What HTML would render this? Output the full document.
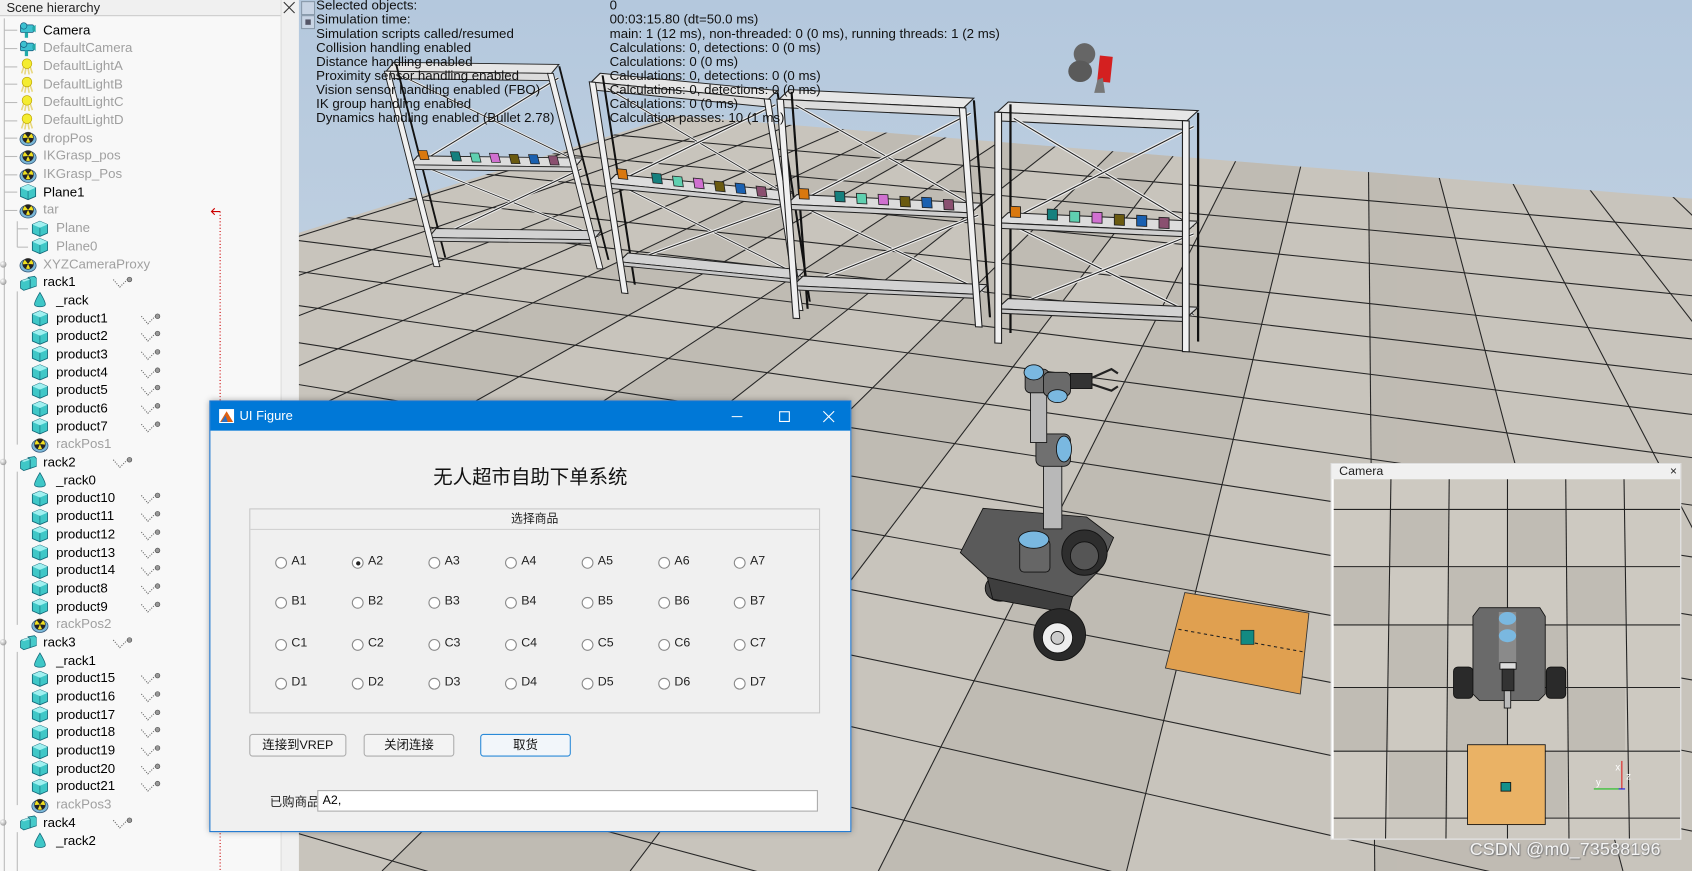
<!DOCTYPE html>
<html><head><meta charset="utf-8"><style>
html,body{margin:0;padding:0;width:1692px;height:871px;overflow:hidden;background:#c9c5bd}
#root{position:absolute;left:0;top:0;width:1568px;height:807px;overflow:hidden;transform-origin:0 0;transform:scale(1.07908,1.07931);font-family:"Liberation Sans","Noto Sans CJK SC",sans-serif}
.abs{position:absolute}
#hier{position:absolute;left:0;top:0;width:260px;height:807px;background:#f8f8f8;overflow:hidden}
#hhead{position:absolute;left:0;top:0;width:260px;height:15px;background:#f0f0f0;border-bottom:1px solid #ccc;font-size:12px;line-height:15px;padding-left:6px;box-sizing:border-box;color:#222}
#strip{position:absolute;left:260px;top:0;width:16px;height:807px;background:#f0f0f0;border-left:1px solid #ddd}
#list{position:absolute;left:0;top:19.6px;width:260px;height:787px;overflow:hidden}
.r{position:relative;height:16.7px;line-height:16.7px;font-size:12.3px;color:#000;white-space:nowrap}
.r svg.ic{position:absolute;top:0.5px;width:16px;height:16px}
.r span{position:absolute}
.l0 svg.ic{left:18px}.l0 span{left:40px}
.l1 svg.ic{left:29px}.l1 span{left:52px}
.g{color:#a0a0a0}
.lk{position:absolute;left:130px;top:3px;width:20px;height:12px}
.l0 .lk{left:104px}
.ex{position:absolute;left:0;top:5px;width:6px;height:6px;border-radius:50%;background:radial-gradient(circle at 35% 35%,#fff,#777)}
#stats{position:absolute;left:293px;top:-1px;font-size:12.3px;line-height:13px;color:#111}
#stats div{height:13px;white-space:nowrap}
#stats b{font-weight:normal;position:absolute;left:272px}
#dlg{position:absolute;left:194px;top:371px;width:595px;height:400px;background:#f0f0f0;border:1px solid #1874d0;box-sizing:border-box;box-shadow:0 0 6px rgba(0,0,0,.35)}
#tb{position:absolute;left:0;top:0;width:100%;height:27px;background:#0078d7;color:#fff;font-size:12px;line-height:27px}
.rad{position:absolute;width:11px;height:11px;border:1px solid #8a8a8a;border-radius:50%;background:#fff;box-sizing:border-box}
.rl{position:absolute;font-size:11.5px;color:#222}
.btn{position:absolute;top:308px;height:21px;border:1px solid #adadad;border-radius:3px;background:#f3f3f3;font-size:11.5px;text-align:center;line-height:20px;box-sizing:border-box;color:#111}
#cam{position:absolute;left:1233px;top:429px;width:325px;height:349px;background:#fff;border:1px solid #ddd;box-sizing:border-box;overflow:hidden}
</style></head><body><div id="root">

<svg class="abs" style="left:0;top:0" width="1568" height="807" viewBox="0 0 1568 807">
<defs>
<linearGradient id="sky" x1="0" y1="0" x2="0" y2="1"><stop offset="0" stop-color="#b4c8dd"/><stop offset="1" stop-color="#d6dfe8"/></linearGradient>
<clipPath id="fl"><polygon points="276,216 626,107 1568,184 1568,807 276,807"/></clipPath>
<g id="rack">
 <g fill="none" stroke="#222" stroke-width="1">
  <polygon points="10,-10 180,-10 170,0 0,0" fill="#e6e6e6"/>
  <polygon points="0,0 170,0 170,8 0,8" fill="#dcdcdc"/>
  <line x1="12" y1="-8" x2="12" y2="205" stroke="#111" stroke-width="2"/>
  <line x1="180" y1="-8" x2="180" y2="205" stroke="#111" stroke-width="2"/>
  <line x1="15" y1="5" x2="176" y2="98" stroke="#eee" stroke-width="3"/>
  <line x1="15" y1="5" x2="176" y2="98"/>
  <line x1="176" y1="5" x2="15" y2="98" stroke="#eee" stroke-width="3"/>
  <line x1="176" y1="5" x2="15" y2="98"/>
  <line x1="15" y1="105" x2="176" y2="180" stroke="#eee" stroke-width="3"/>
  <line x1="15" y1="105" x2="176" y2="180"/>
  <line x1="176" y1="105" x2="15" y2="180" stroke="#eee" stroke-width="3"/>
  <line x1="176" y1="105" x2="15" y2="180"/>
  <polygon points="10,93 180,93 170,103 0,103" fill="#dcdcdc"/>
  <polygon points="0,103 170,103 170,108 0,108" fill="#cfcfcf"/>
  <polygon points="10,173 180,173 170,183 0,183" fill="#d2d2d2"/>
  <polygon points="0,183 170,183 170,187 0,187" fill="#c8c8c8"/>
  <rect x="-2" y="0" width="6" height="215" fill="#f0f0f0"/>
  <rect x="166" y="0" width="6" height="215" fill="#f0f0f0"/>
 </g>
 <g stroke="#222" stroke-width=".8">
  <rect x="12" y="87" width="9" height="10" fill="#d9780f"/>
  <rect x="45" y="88" width="9" height="10" fill="#15807e"/>
  <rect x="65" y="89" width="9" height="10" fill="#5fd0b0"/>
  <rect x="85" y="89" width="9" height="10" fill="#d070d0"/>
  <rect x="105" y="90" width="9" height="10" fill="#6a5a10"/>
  <rect x="125" y="90" width="9" height="10" fill="#1a60b0"/>
  <rect x="145" y="91" width="9" height="10" fill="#8a5070"/>
 </g>
</g>
<symbol id="cube" viewBox="0 0 16 16"><polygon points="8,1 15,4 15,12 8,15 1,12 1,4" fill="#3fc7c7" stroke="#167" stroke-width=".8"/><polygon points="8,1 15,4 8,7 1,4" fill="#9ff0f0"/><line x1="8" y1="7" x2="8" y2="15" stroke="#167" stroke-width=".6"/></symbol>
<symbol id="multi" viewBox="0 0 16 16"><polygon points="2,6 8,4 10,5 10,13 4,15 1,13 1,7" fill="#3fc7c7" stroke="#167" stroke-width=".7"/><polygon points="8,3 14,2 16,4 16,11 10,13 10,5" fill="#46caca" stroke="#167" stroke-width=".7"/><polygon points="2,6 8,4 10,5 4,7" fill="#a0eeee"/></symbol>
<symbol id="dummy" viewBox="0 0 16 16"><ellipse cx="8" cy="9" rx="7.5" ry="6" fill="#7ab8d8" stroke="#357" stroke-width=".7"/><circle cx="8" cy="7.5" r="5" fill="#f0e020" stroke="#333" stroke-width=".6"/><path d="M8,7.5 L5,3.7 A5,5 0 0 1 11,3.7Z M8,7.5 L13,8 A5,5 0 0 1 10,12Z M8,7.5 L6,12 A5,5 0 0 1 3,8Z" fill="#222"/></symbol>
<symbol id="camic" viewBox="0 0 16 16"><rect x="1" y="3" width="12" height="7" rx="1" fill="#3cc0d0" stroke="#157" stroke-width=".7"/><circle cx="4" cy="4" r="3" fill="#3cc0d0" stroke="#157" stroke-width=".6"/><polygon points="12,5 15,3 15,10 12,8" fill="#2aa"/><rect x="5" y="10" width="3" height="5" fill="#2aa"/></symbol>
<symbol id="light" viewBox="0 0 16 16"><path d="M4,9 L2,15 M6,10 L5,16 M8,10 L9,16 M10,9 L12,15" stroke="#e8d880" stroke-width="1.5"/><circle cx="7" cy="6" r="4.5" fill="#f4ec30" stroke="#b9a000" stroke-width=".6"/></symbol>
<symbol id="drop" viewBox="0 0 16 16"><path d="M8,1 C5,6 3,10 3,12 C3,15 13,15 13,12 C13,10 11,6 8,1Z" fill="#3fc7c7" stroke="#167" stroke-width=".7"/></symbol>
<symbol id="lnk" viewBox="0 0 20 12"><path d="M1,3 L7,10 L14,3" stroke="#666" stroke-width="1" stroke-dasharray="1,1.3" fill="none"/><circle cx="16" cy="3" r="2.2" fill="#999" stroke="#444" stroke-width=".5"/></symbol>
</defs>
<rect x="276" y="0" width="1292" height="807" fill="url(#sky)"/>
<polygon points="276,216 626,107 1568,184 1568,807 276,807" fill="#c8c4bc"/>
<g clip-path="url(#fl)" stroke="#262626" stroke-width="1" fill="none">
 <g fill="#bab6ae" stroke="none" opacity=".6">
  <polygon points="1266,-91 1044,807 814,807"/>
  <polygon points="1266,-91 584,807 354,807"/>
  <polygon points="1266,-91 124,807 -106,807"/>
  <polygon points="1266,-91 -336,807 -600,807"/>
  <polygon points="1266,-91 1504,807 1274,807"/>
 </g>
 <g>
 <line x1="1266" y1="-91" x2="-2000" y2="807"/><line x1="1266" y1="-91" x2="-1600" y2="807"/><line x1="1266" y1="-91" x2="-1300" y2="807"/><line x1="1266" y1="-91" x2="-1050" y2="807"/><line x1="1266" y1="-91" x2="-800" y2="807"/><line x1="1266" y1="-91" x2="-600" y2="807"/><line x1="1266" y1="-91" x2="-336" y2="807"/><line x1="1266" y1="-91" x2="-106" y2="807"/><line x1="1266" y1="-91" x2="124" y2="807"/><line x1="1266" y1="-91" x2="354" y2="807"/><line x1="1266" y1="-91" x2="584" y2="807"/><line x1="1266" y1="-91" x2="814" y2="807"/><line x1="1266" y1="-91" x2="1044" y2="807"/><line x1="1266" y1="-91" x2="1274" y2="807"/><line x1="1266" y1="-91" x2="1504" y2="807"/><line x1="1266" y1="-91" x2="1734" y2="807"/><line x1="1266" y1="-91" x2="1964" y2="807"/><line x1="1266" y1="-91" x2="2200" y2="807"/>
 <line x1="-3000" y1="-186" x2="1568" y2="212"/><line x1="-3000" y1="-186" x2="1568" y2="241"/><line x1="-3000" y1="-186" x2="1568" y2="274"/><line x1="-3000" y1="-186" x2="1568" y2="314"/><line x1="-3000" y1="-186" x2="1568" y2="347"/><line x1="-3000" y1="-186" x2="1568" y2="384"/><line x1="-3000" y1="-186" x2="1568" y2="424"/><line x1="-3000" y1="-186" x2="1568" y2="468"/><line x1="-3000" y1="-186" x2="1568" y2="516"/><line x1="-3000" y1="-186" x2="1568" y2="570"/><line x1="-3000" y1="-186" x2="1568" y2="630"/><line x1="-3000" y1="-186" x2="1568" y2="697"/><line x1="-3000" y1="-186" x2="1568" y2="770"/><line x1="-3000" y1="-186" x2="1568" y2="850"/><line x1="-3000" y1="-186" x2="1568" y2="940"/><line x1="-3000" y1="-186" x2="1568" y2="1040"/><line x1="-3000" y1="-186" x2="1568" y2="1150"/>
 </g>
</g>
<use href="#rack" transform="matrix(0.9,0.012,0.214,0.842,358,66)"/>
<use href="#rack" transform="matrix(0.965,0.094,0.14,0.91,548,76)"/>
<use href="#rack" transform="matrix(1.006,0.047,0.07,0.944,722,92)"/>
<use href="#rack" transform="matrix(1.035,0.047,0,0.995,924,104)"/>
<g><ellipse cx="1005" cy="50" rx="10" ry="10" fill="#666"/><ellipse cx="1001" cy="66" rx="11" ry="10" fill="#5a5a5a"/><rect x="1018" y="52" width="12" height="24" fill="#d42020" transform="rotate(6 1024 64)"/><polygon points="1017,74 1022,72 1024,86 1014,86" fill="#777"/></g>
<polygon points="1098,549 1213,568 1205,643 1080,619" fill="#e0a050" stroke="#333" stroke-width=".8"/>
<line x1="1092" y1="583" x2="1208" y2="604" stroke="#222" stroke-dasharray="3,3"/>
<rect x="1150" y="584" width="12" height="13" fill="#138a82" stroke="#133" stroke-width=".7"/>
<g stroke="#111" stroke-width=".8">
 <ellipse cx="927" cy="545" rx="14" ry="12" fill="#444"/>
 <polygon points="890,512 911,471 1007,479 1032,498 1019,528 994,553 915,535" fill="#5a5a5a"/>
 <polygon points="915,535 994,553 990,568 920,555" fill="#3e3e3e"/>
 <circle cx="1005" cy="512" r="21" fill="#2e2e2e"/><circle cx="1005" cy="515" r="13" fill="#555"/>
 <circle cx="982" cy="588" r="24" fill="#2a2a2a"/><circle cx="980" cy="591" r="14" fill="#eee"/><circle cx="980" cy="591" r="6" fill="#ccc"/>
 <rect x="945" y="500" width="28" height="30" rx="4" fill="#666"/>
 <ellipse cx="958" cy="500" rx="14" ry="8" fill="#7ab8e0"/>
 <rect x="967" y="430" width="17" height="60" fill="#b8b8b8"/>
 <rect x="960" y="402" width="32" height="30" rx="6" fill="#707070"/>
 <ellipse cx="986" cy="416" rx="7" ry="12" fill="#7ab8e0"/>
 <rect x="955" y="355" width="15" height="55" fill="#b8b8b8"/>
 <rect x="950" y="342" width="22" height="22" rx="5" fill="#707070"/>
 <ellipse cx="958" cy="345" rx="9" ry="7" fill="#7ab8e0"/>
 <rect x="967" y="345" width="25" height="22" rx="5" fill="#6a6a6a"/>
 <ellipse cx="980" cy="367" rx="9" ry="6" fill="#7ab8e0"/>
 <rect x="992" y="346" width="20" height="14" fill="#333"/>
 <path d="M1012,350 L1030,342 L1036,346 M1012,356 L1030,362 L1036,358" fill="none" stroke="#222" stroke-width="2"/>
</g>
</svg>

<div id="stats">
<div>Selected objects:<b>0</b></div>
<div>Simulation time:<b>00:03:15.80 (dt=50.0 ms)</b></div>
<div>Simulation scripts called/resumed<b>main: 1 (12 ms), non-threaded: 0 (0 ms), running threads: 1 (2 ms)</b></div>
<div>Collision handling enabled<b>Calculations: 0, detections: 0 (0 ms)</b></div>
<div>Distance handling enabled<b>Calculations: 0 (0 ms)</b></div>
<div>Proximity sensor handling enabled<b>Calculations: 0, detections: 0 (0 ms)</b></div>
<div>Vision sensor handling enabled (FBO)<b>Calculations: 0, detections: 0 (0 ms)</b></div>
<div>IK group handling enabled<b>Calculations: 0 (0 ms)</b></div>
<div>Dynamics handling enabled (Bullet 2.78)<b>Calculation passes: 10 (1 ms)</b></div>
</div>
<div class="abs" style="left:279px;top:1px;width:11px;height:11px;background:#c8d4e4;border:1px solid #8899aa"></div>
<div class="abs" style="left:279px;top:14px;width:11px;height:11px;background:#c8d4e4;border:1px solid #8899aa"><div style="margin:3px;width:5px;height:5px;background:#556"></div></div>

<div id="hier">
<div id="hhead">Scene hierarchy</div>
<svg class="abs" style="left:0;top:0" width="260" height="807">
<g stroke="#bbb" stroke-width="1">
<line x1="4" y1="17" x2="4" y2="807"/><line x1="4" y1="28" x2="16" y2="28"/><line x1="4" y1="45" x2="16" y2="45"/><line x1="4" y1="62" x2="16" y2="62"/><line x1="4" y1="78" x2="16" y2="78"/><line x1="4" y1="95" x2="16" y2="95"/><line x1="4" y1="112" x2="16" y2="112"/><line x1="4" y1="128" x2="16" y2="128"/><line x1="4" y1="145" x2="16" y2="145"/><line x1="4" y1="162" x2="16" y2="162"/><line x1="4" y1="178" x2="16" y2="178"/><line x1="4" y1="195" x2="16" y2="195"/>
<line x1="16" y1="205" x2="16" y2="229"/><line x1="16" y1="212" x2="26" y2="212"/><line x1="16" y1="229" x2="26" y2="229"/>
<line x1="16" y1="270" x2="16" y2="412"/><line x1="16" y1="437" x2="16" y2="579"/><line x1="16" y1="604" x2="16" y2="746"/><line x1="16" y1="771" x2="16" y2="807"/>
</g>
<g stroke="#cc0000" stroke-width="1" stroke-dasharray="1,2" fill="none"><line x1="204" y1="196" x2="204" y2="807"/><path d="M204,196 L196,196 M199,193 L196,196 L199,199" stroke-dasharray="none"/></g>
</svg>
<div id="list">
<div class="r l0"><svg class="ic"><use href="#camic"/></svg><span>Camera</span></div>
<div class="r l0 g"><svg class="ic"><use href="#camic"/></svg><span>DefaultCamera</span></div>
<div class="r l0 g"><svg class="ic"><use href="#light"/></svg><span>DefaultLightA</span></div>
<div class="r l0 g"><svg class="ic"><use href="#light"/></svg><span>DefaultLightB</span></div>
<div class="r l0 g"><svg class="ic"><use href="#light"/></svg><span>DefaultLightC</span></div>
<div class="r l0 g"><svg class="ic"><use href="#light"/></svg><span>DefaultLightD</span></div>
<div class="r l0 g"><svg class="ic"><use href="#dummy"/></svg><span>dropPos</span></div>
<div class="r l0 g"><svg class="ic"><use href="#dummy"/></svg><span>IKGrasp_pos</span></div>
<div class="r l0 g"><svg class="ic"><use href="#dummy"/></svg><span>IKGrasp_Pos</span></div>
<div class="r l0"><svg class="ic"><use href="#cube"/></svg><span>Plane1</span></div>
<div class="r l0 g"><svg class="ic"><use href="#dummy"/></svg><span>tar</span></div>
<div class="r l1 g"><svg class="ic"><use href="#cube"/></svg><span>Plane</span></div>
<div class="r l1 g"><svg class="ic"><use href="#cube"/></svg><span>Plane0</span></div>
<div class="r l0 g"><i class="ex"></i><svg class="ic"><use href="#dummy"/></svg><span>XYZCameraProxy</span></div>
<div class="r l0"><i class="ex"></i><svg class="ic"><use href="#multi"/></svg><span>rack1</span><svg class="lk"><use href="#lnk"/></svg></div>
<div class="r l1"><svg class="ic"><use href="#drop"/></svg><span>_rack</span></div>
<div class="r l1"><svg class="ic"><use href="#cube"/></svg><span>product1</span><svg class="lk"><use href="#lnk"/></svg></div>
<div class="r l1"><svg class="ic"><use href="#cube"/></svg><span>product2</span><svg class="lk"><use href="#lnk"/></svg></div>
<div class="r l1"><svg class="ic"><use href="#cube"/></svg><span>product3</span><svg class="lk"><use href="#lnk"/></svg></div>
<div class="r l1"><svg class="ic"><use href="#cube"/></svg><span>product4</span><svg class="lk"><use href="#lnk"/></svg></div>
<div class="r l1"><svg class="ic"><use href="#cube"/></svg><span>product5</span><svg class="lk"><use href="#lnk"/></svg></div>
<div class="r l1"><svg class="ic"><use href="#cube"/></svg><span>product6</span><svg class="lk"><use href="#lnk"/></svg></div>
<div class="r l1"><svg class="ic"><use href="#cube"/></svg><span>product7</span><svg class="lk"><use href="#lnk"/></svg></div>
<div class="r l1 g"><svg class="ic"><use href="#dummy"/></svg><span>rackPos1</span></div>
<div class="r l0"><i class="ex"></i><svg class="ic"><use href="#multi"/></svg><span>rack2</span><svg class="lk"><use href="#lnk"/></svg></div>
<div class="r l1"><svg class="ic"><use href="#drop"/></svg><span>_rack0</span></div>
<div class="r l1"><svg class="ic"><use href="#cube"/></svg><span>product10</span><svg class="lk"><use href="#lnk"/></svg></div>
<div class="r l1"><svg class="ic"><use href="#cube"/></svg><span>product11</span><svg class="lk"><use href="#lnk"/></svg></div>
<div class="r l1"><svg class="ic"><use href="#cube"/></svg><span>product12</span><svg class="lk"><use href="#lnk"/></svg></div>
<div class="r l1"><svg class="ic"><use href="#cube"/></svg><span>product13</span><svg class="lk"><use href="#lnk"/></svg></div>
<div class="r l1"><svg class="ic"><use href="#cube"/></svg><span>product14</span><svg class="lk"><use href="#lnk"/></svg></div>
<div class="r l1"><svg class="ic"><use href="#cube"/></svg><span>product8</span><svg class="lk"><use href="#lnk"/></svg></div>
<div class="r l1"><svg class="ic"><use href="#cube"/></svg><span>product9</span><svg class="lk"><use href="#lnk"/></svg></div>
<div class="r l1 g"><svg class="ic"><use href="#dummy"/></svg><span>rackPos2</span></div>
<div class="r l0"><i class="ex"></i><svg class="ic"><use href="#multi"/></svg><span>rack3</span><svg class="lk"><use href="#lnk"/></svg></div>
<div class="r l1"><svg class="ic"><use href="#drop"/></svg><span>_rack1</span></div>
<div class="r l1"><svg class="ic"><use href="#cube"/></svg><span>product15</span><svg class="lk"><use href="#lnk"/></svg></div>
<div class="r l1"><svg class="ic"><use href="#cube"/></svg><span>product16</span><svg class="lk"><use href="#lnk"/></svg></div>
<div class="r l1"><svg class="ic"><use href="#cube"/></svg><span>product17</span><svg class="lk"><use href="#lnk"/></svg></div>
<div class="r l1"><svg class="ic"><use href="#cube"/></svg><span>product18</span><svg class="lk"><use href="#lnk"/></svg></div>
<div class="r l1"><svg class="ic"><use href="#cube"/></svg><span>product19</span><svg class="lk"><use href="#lnk"/></svg></div>
<div class="r l1"><svg class="ic"><use href="#cube"/></svg><span>product20</span><svg class="lk"><use href="#lnk"/></svg></div>
<div class="r l1"><svg class="ic"><use href="#cube"/></svg><span>product21</span><svg class="lk"><use href="#lnk"/></svg></div>
<div class="r l1 g"><svg class="ic"><use href="#dummy"/></svg><span>rackPos3</span></div>
<div class="r l0"><i class="ex"></i><svg class="ic"><use href="#multi"/></svg><span>rack4</span><svg class="lk"><use href="#lnk"/></svg></div>
<div class="r l1"><svg class="ic"><use href="#drop"/></svg><span>_rack2</span></div>
</div>
</div>
<div id="strip"></div>
<svg class="abs" style="left:262px;top:1px" width="12" height="12"><path d="M1,1 L11,11 M11,1 L1,11" stroke="#333" stroke-width="1"/></svg>

<div id="cam">
<div style="position:absolute;left:0;top:0;width:100%;height:14px;background:#f0f0f0;font-size:11.5px;line-height:14px;padding-left:7px;box-sizing:border-box;color:#222">Camera<span style="position:absolute;right:3px;top:0;font-size:11px">×</span></div>
<svg class="abs" style="left:0;top:0" width="325" height="349" viewBox="1233 429 325 349">
<rect x="1235" y="443" width="321" height="333" fill="#cdc9c1"/>
<g fill="#c0bcb4"><rect x="1286" y="471" width="55" height="53"/><rect x="1396" y="471" width="55" height="53"/><rect x="1235" y="524" width="51" height="54"/><rect x="1341" y="524" width="55" height="54"/><rect x="1451" y="524" width="54" height="54"/><rect x="1286" y="578" width="55" height="58"/><rect x="1396" y="578" width="55" height="58"/><rect x="1235" y="636" width="51" height="59"/><rect x="1341" y="636" width="55" height="59"/><rect x="1451" y="636" width="54" height="59"/><rect x="1286" y="695" width="55" height="62"/><rect x="1396" y="695" width="55" height="62"/></g>
<g stroke="#222" stroke-width="1"><line x1="1288" y1="443" x2="1283" y2="776"/><line x1="1342" y1="443" x2="1339" y2="776"/><line x1="1396" y1="443" x2="1396" y2="776"/><line x1="1450" y1="443" x2="1453" y2="776"/><line x1="1504" y1="443" x2="1509" y2="776"/>
<line x1="1235" y1="471" x2="1556" y2="471"/><line x1="1235" y1="524" x2="1556" y2="524"/><line x1="1235" y1="578" x2="1556" y2="578"/><line x1="1235" y1="636" x2="1556" y2="636"/><line x1="1235" y1="695" x2="1556" y2="695"/><line x1="1235" y1="757" x2="1556" y2="757"/></g>
<g stroke="#111" stroke-width=".8">
<rect x="1346" y="617" width="18" height="29" rx="4" fill="#2a2a2a"/><rect x="1432" y="617" width="18" height="29" rx="4" fill="#2a2a2a"/>
<polygon points="1370,562 1426,562 1431,570 1431,642 1425,648 1370,648 1364,642 1364,570" fill="#6a6a6a"/>
<rect x="1388" y="566" width="16" height="48" fill="#8a8a8a" stroke="none"/>
<ellipse cx="1396" cy="572" rx="8" ry="6" fill="#7ab8e0" stroke="none"/><ellipse cx="1396" cy="588" rx="8" ry="6" fill="#7ab8e0" stroke="none"/>
<rect x="1389" y="613" width="15" height="6" fill="#ddd"/>
<rect x="1391" y="619" width="11" height="20" fill="#333"/><rect x="1393" y="639" width="6" height="16" fill="#bbb"/>
<rect x="1359" y="689" width="72" height="74" fill="#eab265"/>
<rect x="1390" y="724" width="9" height="8" fill="#13908a"/>
</g>
<g stroke-width="1"><line x1="1476" y1="730" x2="1502" y2="730" stroke="#20c020"/><line x1="1502" y1="704" x2="1502" y2="730" stroke="#e02020"/><line x1="1499" y1="730" x2="1505" y2="730" stroke="#2020e0"/></g>
<g font-size="9" fill="#fff" font-family="Liberation Sans"><text x="1496" y="713">x</text><text x="1478" y="727">y</text><text x="1506" y="721">z</text></g>
</svg>
</div>
<div class="abs" style="left:1362px;top:778px;font-size:16.5px;color:#f4f4f4;text-shadow:1px 1px 1px #777,-1px 0 1px #999;letter-spacing:.2px;white-space:nowrap">CSDN @m0_73588196</div>

<div id="dlg">
<div id="tb"><svg class="abs" style="left:8px;top:7px" width="14" height="13"><rect x="0" y="0" width="14" height="13" fill="#fff"/><polygon points="1,12 7,2 13,12" fill="#e06010"/><polygon points="2,12 6,6 8,12" fill="#3070c0"/></svg><span style="position:absolute;left:27px">UI Figure</span>
<svg class="abs" style="left:483px;top:8px" width="100" height="12"><line x1="0" y1="6" x2="10" y2="6" stroke="#fff"/><rect x="44.5" y="1.5" width="9" height="9" fill="none" stroke="#fff"/><path d="M85,1 L95,11 M95,1 L85,11" stroke="#fff"/></svg></div>
<div class="abs" style="left:0;width:100%;top:56px;text-align:center;font-size:18px;color:#111">无人超市自助下单系统</div>
<div class="abs" style="left:36px;top:99px;width:529px;height:190px;border:1px solid #c8c8c8;box-sizing:border-box">
 <div style="height:18px;border-bottom:1px solid #d0d0d0;text-align:center;font-size:11px;line-height:18px;color:#222">选择商品</div>
</div>
<div class="rad" style="left:60px;top:144px"></div><div class="rl" style="left:75px;top:142px">A1</div>
<div class="rad" style="left:131px;top:144px"><div style="margin:2.5px;width:4px;height:4px;border-radius:50%;background:#222"></div></div><div class="rl" style="left:146px;top:142px">A2</div>
<div class="rad" style="left:202px;top:144px"></div><div class="rl" style="left:217px;top:142px">A3</div>
<div class="rad" style="left:273px;top:144px"></div><div class="rl" style="left:288px;top:142px">A4</div>
<div class="rad" style="left:344px;top:144px"></div><div class="rl" style="left:359px;top:142px">A5</div>
<div class="rad" style="left:415px;top:144px"></div><div class="rl" style="left:430px;top:142px">A6</div>
<div class="rad" style="left:485px;top:144px"></div><div class="rl" style="left:500px;top:142px">A7</div>
<div class="rad" style="left:60px;top:181px"></div><div class="rl" style="left:75px;top:179px">B1</div>
<div class="rad" style="left:131px;top:181px"></div><div class="rl" style="left:146px;top:179px">B2</div>
<div class="rad" style="left:202px;top:181px"></div><div class="rl" style="left:217px;top:179px">B3</div>
<div class="rad" style="left:273px;top:181px"></div><div class="rl" style="left:288px;top:179px">B4</div>
<div class="rad" style="left:344px;top:181px"></div><div class="rl" style="left:359px;top:179px">B5</div>
<div class="rad" style="left:415px;top:181px"></div><div class="rl" style="left:430px;top:179px">B6</div>
<div class="rad" style="left:485px;top:181px"></div><div class="rl" style="left:500px;top:179px">B7</div>
<div class="rad" style="left:60px;top:220px"></div><div class="rl" style="left:75px;top:218px">C1</div>
<div class="rad" style="left:131px;top:220px"></div><div class="rl" style="left:146px;top:218px">C2</div>
<div class="rad" style="left:202px;top:220px"></div><div class="rl" style="left:217px;top:218px">C3</div>
<div class="rad" style="left:273px;top:220px"></div><div class="rl" style="left:288px;top:218px">C4</div>
<div class="rad" style="left:344px;top:220px"></div><div class="rl" style="left:359px;top:218px">C5</div>
<div class="rad" style="left:415px;top:220px"></div><div class="rl" style="left:430px;top:218px">C6</div>
<div class="rad" style="left:485px;top:220px"></div><div class="rl" style="left:500px;top:218px">C7</div>
<div class="rad" style="left:60px;top:256px"></div><div class="rl" style="left:75px;top:254px">D1</div>
<div class="rad" style="left:131px;top:256px"></div><div class="rl" style="left:146px;top:254px">D2</div>
<div class="rad" style="left:202px;top:256px"></div><div class="rl" style="left:217px;top:254px">D3</div>
<div class="rad" style="left:273px;top:256px"></div><div class="rl" style="left:288px;top:254px">D4</div>
<div class="rad" style="left:344px;top:256px"></div><div class="rl" style="left:359px;top:254px">D5</div>
<div class="rad" style="left:415px;top:256px"></div><div class="rl" style="left:430px;top:254px">D6</div>
<div class="rad" style="left:485px;top:256px"></div><div class="rl" style="left:500px;top:254px">D7</div>
<div class="btn" style="left:36px;width:90px">连接到VREP</div>
<div class="btn" style="left:142px;width:84px">关闭连接</div>
<div class="btn" style="left:250px;width:84px;border-color:#2a8ad8;background:#f2f6fa">取货</div>
<div class="rl" style="left:55px;top:363px">已购商品</div>
<div class="abs" style="left:99px;top:360px;width:464px;height:20px;background:#fff;border:1px solid #aaa;box-sizing:border-box;font-size:11.5px;line-height:18px;padding-left:4px">A2,</div>
</div>

</div></body></html>
